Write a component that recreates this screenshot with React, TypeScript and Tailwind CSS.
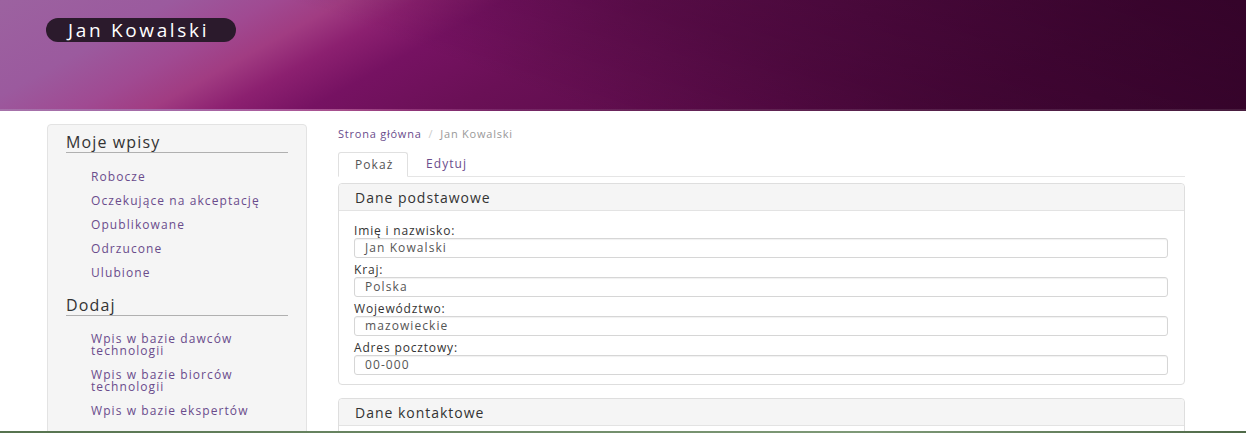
import React from 'react';

const MY_ENTRIES = ['Robocze', 'Oczekujące na akceptację', 'Opublikowane', 'Odrzucone', 'Ulubione'];
const ADD_LINKS = ['Wpis w bazie dawców technologii', 'Wpis w bazie biorców technologii', 'Wpis w bazie ekspertów'];

const FIELDS = [
  { label: 'Imię i nazwisko:', value: 'Jan Kowalski' },
  { label: 'Kraj:', value: 'Polska' },
  { label: 'Województwo:', value: 'mazowieckie' },
  { label: 'Adres pocztowy:', value: '00-000' },
];

const SideHeading: React.FC<{ title: string; className?: string }> = ({ title, className = '' }) => (
  <h3 className={`text-[16px] leading-[20px] tracking-[0.07em] text-[#333] border-b border-[#b0b0b0] ${className}`}>{title}</h3>
);

const SideLink: React.FC<{ text: string }> = ({ text }) => (
  <li className="py-[6px] pl-[25px] pr-[2px]">
    <a className="block text-[12px] leading-[12px] tracking-[0.09em] text-[#6a4c8c]">{text}</a>
  </li>
);

const Field: React.FC<{ label: string; value: string }> = ({ label, value }) => (
  <div className="mb-[5px]">
    <label className="block text-[12px] leading-[14px] tracking-[0.07em] text-[#333]">{label}</label>
    <div className="h-[20px] border border-[#d6d6d6] rounded-[3px] bg-white shadow-[inset_0_1px_1px_rgba(0,0,0,0.06)] pl-[10px] flex items-center">
      <span className="text-[12px] tracking-[0.09em] text-[#555]">{value}</span>
    </div>
  </div>
);

const Panel: React.FC<{ title: string; children?: React.ReactNode }> = ({ title, children }) => (
  <div className="border border-[#dedede] rounded-[4px] bg-white">
    <div className="h-[27px] bg-[#f5f5f5] border-b border-[#e3e3e3] rounded-t-[4px] flex items-center px-[16px]">
      <span className="text-[14px] tracking-[0.07em] text-[#333]">{title}</span>
    </div>
    {children}
  </div>
);

export default function App() {
  return (
    <div className="h-[433px] w-full overflow-hidden flex flex-col bg-white font-['Open_Sans','Liberation_Sans',sans-serif]">
      <header className="h-[111px] shrink-0 border-b-2 border-white/10 bg-[image:linear-gradient(200deg,rgba(30,0,24,0.5)_0%,rgba(30,0,24,0.25)_40%,rgba(30,0,24,0)_62%),linear-gradient(151deg,#9c62a0_0%,#9b5a9e_12%,#a04a92_19%,#a13c82_24%,#8c2070_29%,#761262_35%,#6a1056_45%,#5c0c4a_62%,#4e083e_80%,#440636_100%)] pt-[18px] pl-[46px]">
        <div className="w-[190px] h-[24px] rounded-full bg-[#2b1a2c] flex items-center pl-[22px]">
          <span className="text-white text-[19px] leading-[24px] tracking-[0.14em]">Jan Kowalski</span>
        </div>
      </header>

      <div className="flex-1 min-h-0 overflow-hidden flex pl-[47px] gap-[31px] pt-[13px]">
        <aside className="w-[260px] shrink-0 bg-[#f5f5f5] border border-[#e3e3e3] rounded-[4px] px-[18px] pt-[7px] h-[400px]">
          <SideHeading title="Moje wpisy" />
          <ul className="mt-[12px]">
            {MY_ENTRIES.map(t => <SideLink key={t} text={t} />)}
          </ul>
          <SideHeading title="Dodaj" className="mt-[10px]" />
          <ul className="mt-[11px]">
            {ADD_LINKS.map(t => <SideLink key={t} text={t} />)}
          </ul>
        </aside>

        <main className="w-[847px] shrink-0">
          <nav className="h-[20px] flex items-center text-[11px] tracking-[0.07em]">
            <a className="text-[#6a4c8c]">Strona główna</a>
            <span className="text-[#ccc] mx-[7px]">/</span>
            <span className="text-[#999]">Jan Kowalski</span>
          </nav>

          <div className="mt-[8px] flex border-b border-[#e5e5e5] h-[25px]">
            <div className="h-[25px] px-[16px] border border-[#e0e0e0] border-b-white bg-white rounded-t-[3px] flex items-center w-[70px]">
              <span className="text-[12px] tracking-[0.09em] text-[#555]">Pokaż</span>
            </div>
            <div className="h-[24px] px-[18px] flex items-center">
              <span className="text-[12px] tracking-[0.09em] text-[#6a4c8c]">Edytuj</span>
            </div>
          </div>

          <div className="mt-[6px]">
            <Panel title="Dane podstawowe">
              <div className="pl-[15px] pr-[16px] pt-[13px] pb-[4px]">
                {FIELDS.map(f => <Field key={f.label} label={f.label} value={f.value} />)}
              </div>
            </Panel>
          </div>

          <div className="mt-[13px]">
            <Panel title="Dane kontaktowe">
              <div className="h-[40px]" />
            </Panel>
          </div>
        </main>
      </div>

      <div className="h-[2px] shrink-0 bg-[linear-gradient(to_right,#56734f,#6f8b68_40%,#7f9a78_70%,#4f6a48)]" />
    </div>
  );
}
